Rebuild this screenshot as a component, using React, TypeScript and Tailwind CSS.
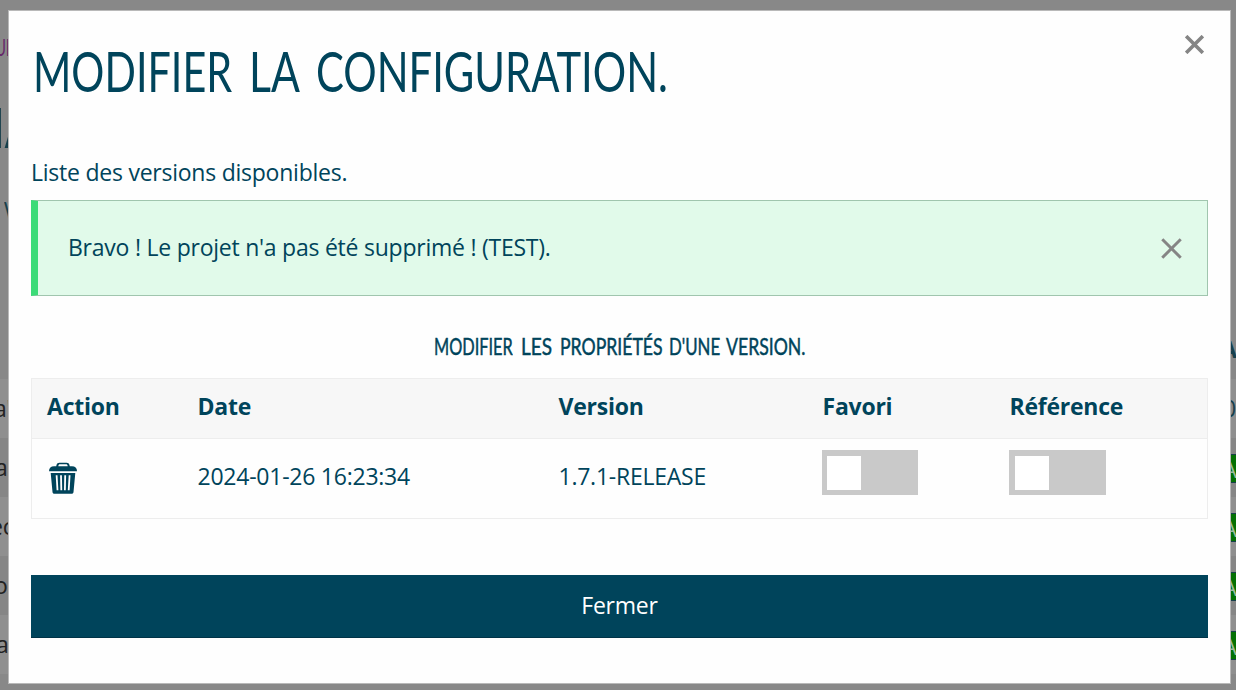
import React from "react";

type Word = { text: string; slot: string; scale: string };

const titleWords: Word[] = [
  { text: "MODIFIER", slot: "w-[216px]", scale: "scale-x-[0.725]" },
  { text: "LA", slot: "w-[67px]", scale: "scale-x-[0.75]" },
  { text: "CONFIGURATION.", slot: "w-[352px]", scale: "scale-x-[0.732]" },
];

const subtitleWords: Word[] = [
  { text: "MODIFIER", slot: "w-[87px]", scale: "scale-x-[0.68]" },
  { text: "LES", slot: "w-[39px]", scale: "scale-x-[0.79]" },
  { text: "PROPRIÉTÉS", slot: "w-[109px]", scale: "scale-x-[0.735]" },
  { text: "D'UNE", slot: "w-[57px]", scale: "scale-x-[0.7]" },
  { text: "VERSION.", slot: "w-[79px]", scale: "scale-x-[0.735]" },
];

function Words({ words }: { words: Word[] }) {
  return (
    <>
      {words.map((w) => (
        <span key={w.text} className={`block shrink-0 whitespace-nowrap ${w.slot}`}>
          <span className={`inline-block origin-left ${w.scale}`}>{w.text}</span>
        </span>
      ))}
    </>
  );
}

function Cross({ className, width }: { className: string; width: number }) {
  return (
    <svg viewBox="0 0 20 20" className={className} fill="none" stroke="#858585" strokeWidth={width}>
      <path d="M1.2 1.2 18.8 18.8M18.8 1.2 1.2 18.8" />
    </svg>
  );
}

function Trash() {
  return (
    <svg viewBox="0 0 28 32" className="-mt-[2px] h-8 w-7" fill="#00445b">
      <path d="M0 9.2C0 6 2 4.3 5 4.3h2.2C7.6 1.8 8.4.8 10.6.8h6.8c2.2 0 3 1 3.4 3.5H23c3 0 5 1.7 5 4.9ZM9.3 4.3h9.4c-.2-1.6-.6-2-1.8-2h-5.8c-1.2 0-1.6.4-1.8 2Z" fillRule="evenodd" />
      <path d="M1.7 11h24.6L24.5 30c-.1 1.2-.8 1.8-2 1.8h-17c-1.2 0-1.9-.6-2-1.8Z" />
      <path d="m7.6 13.2.9 15M12 13.2l.3 15M16.2 13.2l-.3 15M20.6 13.2l-.9 15" stroke="white" strokeWidth="1.8" fill="none" />
    </svg>
  );
}

function Toggle({ className }: { className: string }) {
  return (
    <div className={`-ml-px flex h-[45px] items-center bg-[#c9c9c9] ${className}`}>
      <div className="mt-px h-[34px] w-[34px] bg-white" />
    </div>
  );
}

const leftCells = [
  { text: "a'", offset: "-ml-[6px]" },
  { text: "a", offset: "-ml-[5px]" },
  { text: "ec", offset: "-ml-[10px]" },
  { text: "o", offset: "-ml-[6px]" },
  { text: "a", offset: "-ml-[4px]" },
];

function Backdrop() {
  return (
    <div className="flex h-[690px] justify-between bg-[#888888] text-[#222222]">
      <div className="flex w-2 flex-col overflow-hidden">
        <div className="flex h-[90px] shrink-0 pt-[35px] font-['Lato',sans-serif] text-[23px] leading-6 text-[#66296a]">
          <span className="-ml-[5px] origin-left scale-x-[0.65]">UE</span>
        </div>
        <div className="flex h-[96px] shrink-0 font-['Lato',sans-serif] text-[56px] leading-[74px] text-[#173f4b]">
          <span className="-ml-[7px] origin-left scale-x-[0.75]">IA</span>
        </div>
        <div className="flex h-[193px] shrink-0 pl-1 pt-[8px] font-['Lato',sans-serif] text-[28px] leading-[36px] text-[#173f4b]">
          <span className="origin-left scale-x-[0.7]">V</span>
        </div>
        {leftCells.map((cell, i) => (
          <div
            key={i}
            className={`flex h-[59px] shrink-0 items-center whitespace-nowrap ${i % 2 ? "bg-[#868686]" : "bg-[#8f8f8f]"}`}
          >
            <span className={cell.offset}>{cell.text}</span>
          </div>
        ))}
      </div>
      <div className="flex w-[5px] flex-col overflow-hidden text-[#173f4b]">
        <div className="mt-[331px] h-[48px] shrink-0 font-bold leading-[36px]">
          <span className="-ml-[10px] block">A</span>
        </div>
        <div className="flex h-[59px] shrink-0 items-center bg-[#8f8f8f]">
          <span className="-ml-2">0</span>
        </div>
        {[0, 1, 2, 3].map((i) => (
          <div key={i} className={`h-[59px] shrink-0 pt-4 ${i % 2 ? "bg-[#8f8f8f]" : "bg-[#868686]"}`}>
            <div className="h-[29px] w-full overflow-hidden border-y border-[#173f4b] bg-[#047004] text-[22px] leading-[28px] text-[#9dbb9d]">
              <span className="-ml-[8px] block">A</span>
            </div>
          </div>
        ))}
      </div>
    </div>
  );
}

export default function App() {
  return (
    <div className="relative h-[690px] w-[1236px] overflow-hidden font-['Open_Sans',sans-serif] text-[23px] tracking-[-0.24px] text-[#00445b]">
      <Backdrop />
      <div className="absolute left-2 top-[10px] flex h-[674px] w-[1223px] flex-col border border-[#b9b9b9] bg-[#fefefe] px-[22px]">
        <div className="flex h-[142px] justify-between">
          <h1 className="flex pl-[2px] pt-[25px] font-['Lato',sans-serif] text-[57px] leading-[68px] tracking-normal">
            <Words words={titleWords} />
          </h1>
          <button className="mr-[4px] mt-6 flex h-[19px] w-[19px]">
            <Cross className="h-full w-full" width={3.8} />
          </button>
        </div>
        <p className="flex h-[47px] items-start leading-[38px]">Liste des versions disponibles.</p>
        <div className="flex h-24 shrink-0 items-center justify-between border border-l-[7px] border-[#a0c5ae] border-l-[#3cdb78] bg-[#e1faea] pl-[30px] pr-[25px]">
          <span className="pb-[2px]">Bravo ! Le projet n'a pas été supprimé ! (TEST).</span>
          <Cross className="mt-px h-[21px] w-[21px]" width={2.8} />
        </div>
        <h2 className="flex h-[82px] shrink-0 pl-[403px] pt-[35px] font-['Lato',sans-serif] text-[24px] leading-[30px] tracking-normal [-webkit-text-stroke:0.5px_#00445b]">
          <Words words={subtitleWords} />
        </h2>
        <table className="w-full table-fixed border-collapse border border-[#ededed] text-left">
          <colgroup>
            <col className="w-[151px]" />
            <col className="w-[361px]" />
            <col className="w-[264px]" />
            <col className="w-[187px]" />
            <col />
          </colgroup>
          <thead>
            <tr className="h-[60px] border-b border-[#ededed] bg-[#f7f7f7]">
              {["Action", "Date", "Version", "Favori", "Référence"].map((h) => (
                <th key={h} className="px-[15px] pb-1 pt-0 font-bold">{h}</th>
              ))}
            </tr>
          </thead>
          <tbody>
            <tr className="h-20">
              <td className="pl-[17px]"><Trash /></td>
              <td className="px-[15px] pb-1">2024-01-26 16:23:34</td>
              <td className="px-[15px] pb-1">1.7.1-RELEASE</td>
              <td className="px-[15px] pb-3"><Toggle className="w-24 pl-[5px]" /></td>
              <td className="px-[15px] pb-3"><Toggle className="w-[97px] pl-[6px]" /></td>
            </tr>
          </tbody>
        </table>
        <button className="mt-14 h-[63px] w-full shrink-0 border-b border-[#003347] bg-[#00445b] pb-[2px] text-white">Fermer</button>
      </div>
    </div>
  );
}
